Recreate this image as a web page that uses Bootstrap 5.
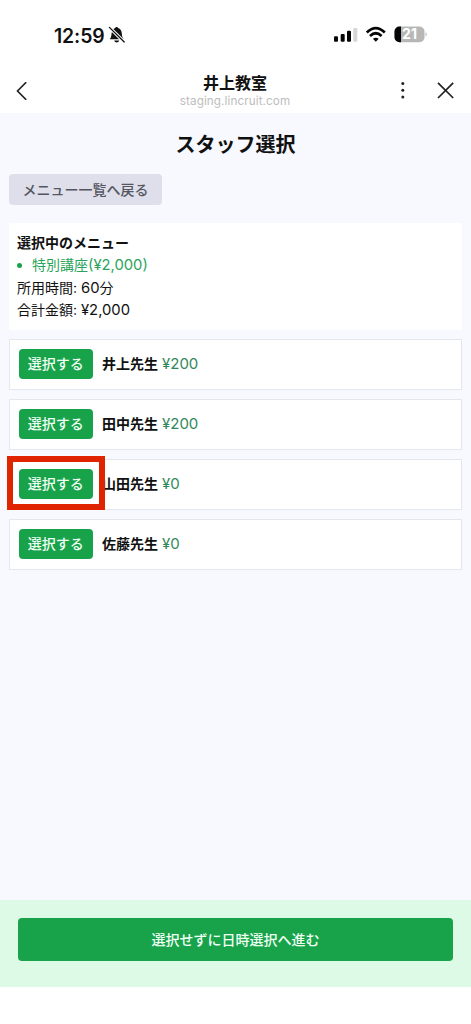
<!DOCTYPE html>
<html lang="ja">
<head>
<meta charset="utf-8">
<meta name="viewport" content="width=device-width, initial-scale=1">
<title>スタッフ選択</title>
<link rel="stylesheet" href="https://cdn.jsdelivr.net/npm/bootstrap@5.3.0/dist/css/bootstrap.min.css">
<style>
  body { font-family: Inter, "Noto Sans CJK JP", sans-serif; font-size: 14px; line-height: 22.5px; color: #111; background: #fff; }
  .screen { height: 1024px; }
  .status-bar { height: 66px; padding: 24px 43px 0 54px; }
  .clock { font-size: 19.4px; font-weight: 600; line-height: 24px; letter-spacing: -.1px; width: 51px; white-space: nowrap; }
  .bell { margin: 1px 0 0 3px; }
  .app-bar { height: 47px; padding: 0 16px 0 15px; }
  .app-side { width: 56px; }
  .app-name { font-size: 16px; line-height: 20px; font-weight: 600; margin-top: 7px; }
  .app-host { font-size: 11.7px; line-height: 14px; letter-spacing: .1px; color: #bdbdbd; margin-top: 1px; }
  .page { background: #f7f9fe; padding: 18px 9px 0; }
  .page-title { font-size: 20px; line-height: 28px; font-weight: 600; margin: 0 0 15px; }
  .btn { --bs-btn-font-size: 14px; --bs-btn-border-width: 0px; --bs-btn-border-radius: 4px; line-height: 22px; }
  .btn-back { --bs-btn-bg: #dedfeb; --bs-btn-color: #55555f; --bs-btn-font-weight: 500; width: 153px; height: 31px; padding: 4px 0; white-space: nowrap; }
  .btn-pick { --bs-btn-bg: #18a34b; --bs-btn-color: #effff3; --bs-btn-font-weight: 500; width: 73.5px; height: 30px; padding: 4px 0; white-space: nowrap; }
  .btn-next { --bs-btn-bg: #18a34b; --bs-btn-color: #effff3; --bs-btn-font-weight: 500; height: 43px; padding: 0; }
  .summary { height: 107px; padding: 9px 8px 8px; margin-top: 17.600px; }
  .chosen { color: #2ba45c; }
  .chosen::before { content: ""; width: 5px; height: 5px; border-radius: 50%; background: #18a34b; margin: 0 10px 0 0; }
  .num { font-size: 14.800px; line-height: 1; }
  .staff-list { gap: 9px; margin-top: 9.400px; }
  .staff { height: 51px; border: 1px solid #e4e7f0; padding: 0 9px; background: #fff; }
  .staff-name { font-weight: 600; margin-left: 9.500px; }
  .fee { color: #30885a; font-size: 15px; margin-left: 4px; }
  .highlight { inset: -13px -12px -11px -12px; border: 6px solid #e02400; pointer-events: none; }
  .next-bar { background: #dcfae6; height: 87px; padding: 18px 18px 0; }
  .home-gap { height: 37px; }
</style>
</head>
<body>
<div class="screen d-flex flex-column">
  <div class="status-bar d-flex align-items-start">
    <span class="clock">12:59</span>
    <svg class="bell" width="18" height="20" viewBox="0 0 18 20" aria-hidden="true">
      <path d="M1.800 14.300C3.800 12.300 3.200 9 4 6.600 4.700 4.400 5.800 3.500 7.200 3.100 7.400 1.600 9.800 1.600 10 3.100 12.500 3.700 13.700 5.800 13.800 8.500 13.900 11.400 14.600 12.700 15.700 14.300Z M6.200 15.500h5c-.4 2.500-4.600 2.500-5 0Z" fill="#111"/>
      <path d="M1.400 2.400 16.200 17" stroke="#fff" stroke-width="3.200"/>
      <path d="M1.400 2.400 16.200 17" stroke="#111" stroke-width="1.300" stroke-linecap="round"/>
    </svg>
    <svg class="ms-auto" width="94" height="22" viewBox="334 24 94 22" aria-hidden="true">
      <g fill="#050505">
        <rect x="334" y="36.300" width="4" height="5.500" rx="1.100"/><rect x="340.700" y="34" width="4" height="7.800" rx="1.100"/><rect x="347" y="30.800" width="4" height="11" rx="1.100"/>
        <rect x="353.300" y="28" width="4" height="13.800" rx="1.100" fill="#d6d6d6"/>
        <path d="M375.800 41.700 372.900 38.800Q375.800 36.500 378.700 38.800Z"/>
      </g>
      <path d="M366.800 32.400Q375.800 23.900 384.800 32.400M370 35.900Q375.800 30.600 381.600 35.900" fill="none" stroke="#050505" stroke-width="2.700"/>
      <rect x="394.500" y="26.500" width="30" height="15.700" rx="5" fill="#b7b7b7"/>
      <path d="M401 26.500v15.700h-1.500a5 5 0 0 1-5-5v-5.700a5 5 0 0 1 5-5Z" fill="#050505"/>
      <path d="M425.600 32.200q2.200 2.200 0 4.400Z" fill="#a8a8a8"/>
      <text x="409.500" y="39.300" text-anchor="middle" font-family="Inter, sans-serif" font-size="14" font-weight="700" fill="#fff">21</text>
    </svg>
  </div>

  <header class="app-bar d-flex align-items-start justify-content-between">
    <div class="app-side">
      <svg class="d-block mt-3" width="14" height="18" viewBox="0 -1 14 20" role="img" aria-label="戻る"><path d="M11.700-.8 2 9 11.700 18.800" fill="none" stroke="#222" stroke-width="1.800"/></svg>
    </div>
    <div class="text-center">
      <div class="app-name">井上教室</div>
      <div class="app-host">staging.lincruit.com</div>
    </div>
    <div class="app-side d-flex justify-content-between">
      <svg class="mt-3" width="7" height="18" viewBox="0 0 7 18" role="img" aria-label="メニュー"><g fill="#222"><circle cx="3.800" cy="1.500" r="1.500"/><circle cx="3.800" cy="8.200" r="1.500"/><circle cx="3.800" cy="14.900" r="1.500"/></g></svg>
      <svg class="mt-3" width="18" height="18" viewBox="0 0 18 18" role="img" aria-label="閉じる"><path d="M1 .8 16.200 16M16.200.8 1 16" fill="none" stroke="#222" stroke-width="1.700"/></svg>
    </div>
  </header>

  <main class="page flex-grow-1">
    <h1 class="page-title text-center">スタッフ選択</h1>
    <button class="btn btn-back d-block" type="button">メニュー一覧へ戻る</button>

    <section class="summary bg-white">
      <div class="fw-bold">選択中のメニュー</div>
      <div class="chosen d-flex align-items-center">特別講座<span class="num">(¥2,000)</span></div>
      <div>所用時間: <span class="num">60</span>分</div>
      <div>合計金額: <span class="num">¥2,000</span></div>
    </section>

    <div class="staff-list d-flex flex-column">
      <div class="staff d-flex align-items-center">
        <button class="btn btn-pick" type="button">選択する</button>
        <span class="staff-name">井上先生</span><span class="fee">¥200</span>
      </div>
      <div class="staff d-flex align-items-center">
        <button class="btn btn-pick" type="button">選択する</button>
        <span class="staff-name">田中先生</span><span class="fee">¥200</span>
      </div>
      <div class="staff d-flex align-items-center">
        <div class="position-relative z-1">
          <button class="btn btn-pick d-block" type="button">選択する</button>
          <span class="highlight position-absolute"></span>
        </div>
        <span class="staff-name">山田先生</span><span class="fee">¥0</span>
      </div>
      <div class="staff d-flex align-items-center">
        <button class="btn btn-pick" type="button">選択する</button>
        <span class="staff-name">佐藤先生</span><span class="fee">¥0</span>
      </div>
    </div>
  </main>

  <footer>
    <div class="next-bar">
      <button class="btn btn-next w-100" type="button">選択せずに日時選択へ進む</button>
    </div>
    <div class="home-gap"></div>
  </footer>
</div>
<script src="https://cdn.jsdelivr.net/npm/bootstrap@5.3.0/dist/js/bootstrap.bundle.min.js"></script>
</body>
</html>
